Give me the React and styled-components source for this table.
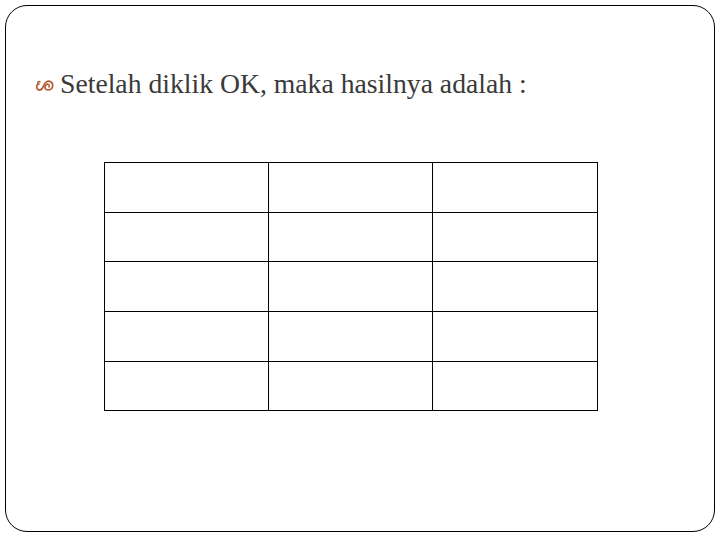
import React from "react";
import styled, { createGlobalStyle } from "styled-components";

const Global = createGlobalStyle`
  html, body {
    margin: 0;
    padding: 0;
    background: #fff;
  }
`;

const Page = styled.div`
  width: 720px;
  height: 540px;
  box-sizing: border-box;
  padding: 5px 5px 8px 5px;
  background: #fff;
`;

const Frame = styled.div`
  height: 100%;
  box-sizing: border-box;
  border: 1.5px solid #000;
  border-radius: 22px;
  padding: 62px 0 0 29px;
`;

const Heading = styled.div`
  display: flex;
  align-items: center;
  gap: 5px;
  font-family: "Liberation Serif", "Times New Roman", serif;
  font-size: 27.7px;
  color: #3a3a3a;
  line-height: 32px;
`;

const Bullet = styled.svg`
  width: 20px;
  height: 14px;
  margin-top: 3px;
`;

const Grid = styled.table`
  margin: 62px 0 0 69px;
  border-collapse: collapse;
  table-layout: fixed;
`;

const Cell = styled.td`
  width: 163.2px;
  height: 48.7px;
  padding: 0;
  border: 1.4px solid #000;
`;

const rows = [0, 1, 2, 3, 4];
const cols = [0, 1, 2];

export default function App() {
  return (
    <Page>
      <Global />
      <Frame>
        <Heading>
          <Bullet viewBox="0 0 20 14">
            <path
              d="M4 5 C1 5 1 10 4 11 C7 12 8 8 9 6 C10 3 13 1 16 3 C19 5 18 11 13 11 C10 11 9 8 11 6 C13 4 15 6 14 8"
              fill="none"
              stroke="#b5562c"
              strokeWidth="1.6"
              strokeLinecap="round"
            />
            <path d="M3 5 C2 3 4 2 5 3" fill="none" stroke="#b5562c" strokeWidth="1.4" strokeLinecap="round" />
          </Bullet>
          <span>Setelah diklik OK, maka hasilnya adalah :</span>
        </Heading>
        <Grid>
          <tbody>
            {rows.map((r) => (
              <tr key={r}>
                {cols.map((c) => (
                  <Cell key={c} />
                ))}
              </tr>
            ))}
          </tbody>
        </Grid>
      </Frame>
    </Page>
  );
}
